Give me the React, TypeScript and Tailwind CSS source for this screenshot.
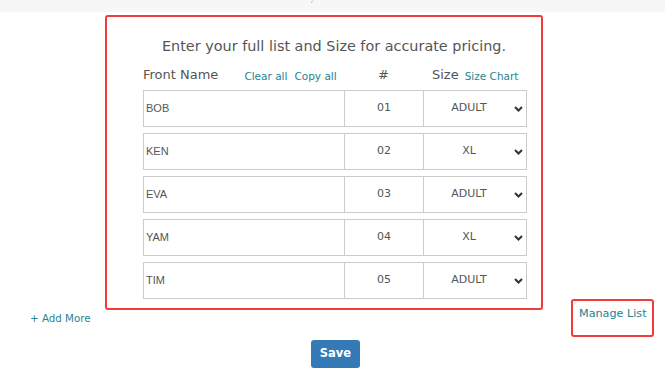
import React from "react";

const rows = [
  { name: "BOB", num: "01", size: "ADULT" },
  { name: "KEN", num: "02", size: "XL" },
  { name: "EVA", num: "03", size: "ADULT" },
  { name: "YAM", num: "04", size: "XL" },
  { name: "TIM", num: "05", size: "ADULT" },
];

function Chevron() {
  return (
    <svg width="9" height="6" viewBox="0 0 9 6" className="block">
      <path d="M1 1 L4.5 4.5 L8 1" fill="none" stroke="#333" strokeWidth="2" />
    </svg>
  );
}

export default function App() {
  return (
    <div className="relative w-[665px] h-[382px] bg-white text-[#555] overflow-hidden" style={{ fontFamily: '"DejaVu Sans", Verdana, sans-serif' }}>
      <div className="h-[12px] bg-[#f7f7f7] pl-[310px]">
        <svg width="4" height="4" viewBox="0 0 4 4" className="block">
          <path d="M1 3 L3 0.5" stroke="#bbb" strokeWidth="1" />
        </svg>
      </div>
      <div className="mt-[3px] ml-[105px] w-[438px] h-[295px] border-2 border-[#f03c3c] rounded-[3px] flex flex-col">
        <div className="mt-[20px] pl-[55px] text-[14.4px] leading-[18px] text-[#555]">
          Enter your full list and Size for accurate pricing.
        </div>
        <div className="mt-[10px] ml-[36px] flex items-end h-[18px]">
          <div className="w-[201px] flex items-end">
            <span className="text-[13px] leading-[16px]">Front Name</span>
            <span className="ml-[26px] text-[10.5px] leading-[14px] text-[#1e8494]">Clear all</span>
            <span className="ml-[7px] text-[10.5px] leading-[14px] text-[#1e8494]">Copy all</span>
          </div>
          <div className="w-[79px] text-center text-[13px] leading-[16px]">#</div>
          <div className="w-[104px] flex items-end pl-[9px]">
            <span className="text-[13px] leading-[16px]">Size</span>
            <span className="ml-[6px] text-[10.5px] leading-[14px] text-[#1e8494]">Size Chart</span>
          </div>
        </div>
        <div className="mt-[7px] ml-[36px] flex flex-col gap-[6px]">
          {rows.map((r) => (
            <div key={r.num} className="w-[384px] h-[37px] border border-[#cccccc] flex text-[11px] text-[#555]">
              <div className="w-[200px] flex items-center pl-[2px]" style={{ fontFamily: '"Liberation Sans", Arial, sans-serif' }}>
                {r.name}
              </div>
              <div className="w-[79px] border-l border-[#cccccc] flex items-center justify-center">{r.num}</div>
              <div className="flex-1 border-l border-[#cccccc] flex items-center justify-center relative">
                <span className="mr-[12px]">{r.size}</span>
                <span className="absolute right-[3px] top-[15px]"><Chevron /></span>
              </div>
            </div>
          ))}
        </div>
      </div>
      <div className="flex items-start h-[30px]">
        <div className="ml-[30px] mt-[1px] text-[10.3px] leading-[14px] text-[#1e8494]">+ Add More</div>
      </div>
      <div className="flex justify-center">
        <button className="ml-[6px] w-[49px] h-[28px] bg-[#337ab7] rounded-[3px] text-white text-[11.5px] font-bold">Save</button>
      </div>
      <div className="absolute left-[571px] top-[299px] w-[83px] h-[38px] border-2 border-[#f03c3c] rounded-[3px] pl-[6px] pt-[6px] text-[11.2px] leading-[14px] text-[#1e8494] whitespace-nowrap">
        Manage List
      </div>
    </div>
  );
}
